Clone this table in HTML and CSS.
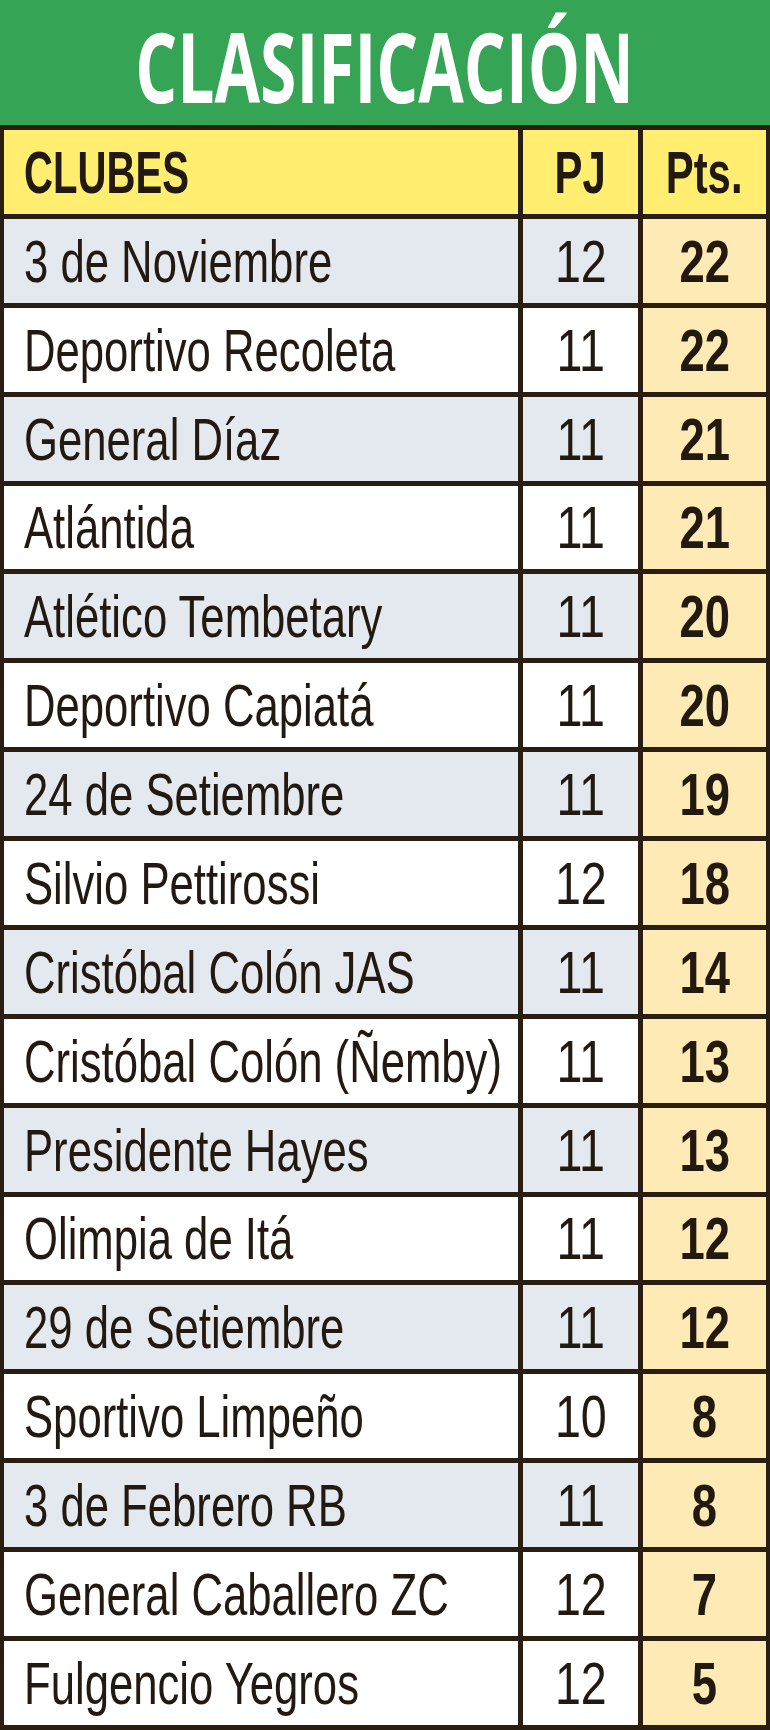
FILE: index.html
```html
<!DOCTYPE html>
<html lang="es">
<head>
<meta charset="utf-8">
<title>Clasificación</title>
<link rel="stylesheet" href="styles.css">
</head>
<body>
<div class="board">
  <h1 class="title"><span>CLASIFICACIÓN</span></h1>
  <div class="table">
    <div class="cell head club"><span>CLUBES</span></div>
    <div class="cell head num"><span>PJ</span></div>
    <div class="cell head pts"><span>Pts.</span></div>

    <div class="cell club alt"><span>3 de Noviembre</span></div>
    <div class="cell num alt"><span>12</span></div>
    <div class="cell pts"><span>22</span></div>

    <div class="cell club"><span>Deportivo Recoleta</span></div>
    <div class="cell num"><span>11</span></div>
    <div class="cell pts"><span>22</span></div>

    <div class="cell club alt"><span>General Díaz</span></div>
    <div class="cell num alt"><span>11</span></div>
    <div class="cell pts"><span>21</span></div>

    <div class="cell club"><span>Atlántida</span></div>
    <div class="cell num"><span>11</span></div>
    <div class="cell pts"><span>21</span></div>

    <div class="cell club alt"><span>Atlético Tembetary</span></div>
    <div class="cell num alt"><span>11</span></div>
    <div class="cell pts"><span>20</span></div>

    <div class="cell club"><span>Deportivo Capiatá</span></div>
    <div class="cell num"><span>11</span></div>
    <div class="cell pts"><span>20</span></div>

    <div class="cell club alt"><span>24 de Setiembre</span></div>
    <div class="cell num alt"><span>11</span></div>
    <div class="cell pts"><span>19</span></div>

    <div class="cell club"><span>Silvio Pettirossi</span></div>
    <div class="cell num"><span>12</span></div>
    <div class="cell pts"><span>18</span></div>

    <div class="cell club alt"><span>Cristóbal Colón JAS</span></div>
    <div class="cell num alt"><span>11</span></div>
    <div class="cell pts"><span>14</span></div>

    <div class="cell club"><span>Cristóbal Colón (Ñemby)</span></div>
    <div class="cell num"><span>11</span></div>
    <div class="cell pts"><span>13</span></div>

    <div class="cell club alt"><span>Presidente Hayes</span></div>
    <div class="cell num alt"><span>11</span></div>
    <div class="cell pts"><span>13</span></div>

    <div class="cell club"><span>Olimpia de Itá</span></div>
    <div class="cell num"><span>11</span></div>
    <div class="cell pts"><span>12</span></div>

    <div class="cell club alt"><span>29 de Setiembre</span></div>
    <div class="cell num alt"><span>11</span></div>
    <div class="cell pts"><span>12</span></div>

    <div class="cell club"><span>Sportivo Limpeño</span></div>
    <div class="cell num"><span>10</span></div>
    <div class="cell pts"><span>8</span></div>

    <div class="cell club alt"><span>3 de Febrero RB</span></div>
    <div class="cell num alt"><span>11</span></div>
    <div class="cell pts"><span>8</span></div>

    <div class="cell club"><span>General Caballero ZC</span></div>
    <div class="cell num"><span>12</span></div>
    <div class="cell pts"><span>7</span></div>

    <div class="cell club"><span>Fulgencio Yegros</span></div>
    <div class="cell num"><span>12</span></div>
    <div class="cell pts"><span>5</span></div>
  </div>
</div>
</body>
</html>
```

FILE: styles.css
```css
html, body {
  margin: 0;
  padding: 0;
}

body {
  width: 770px;
  background: #2a1e12;
}

.board {
  width: 770px;
}

.title {
  margin: 0;
  height: 125px;
  box-sizing: border-box;
  padding-top: 6px;
  background: #35a455;
  color: #ffffff;
  font-family: "Open Sans", "DejaVu Sans", sans-serif;
  font-weight: 700;
  font-size: 97px;
  line-height: 1;
  display: flex;
  align-items: center;
  justify-content: center;
}

.title span {
  display: inline-block;
  transform: scaleX(0.68);
  transform-origin: center;
  white-space: nowrap;
}

.table {
  display: grid;
  grid-template-columns: 514px 115px 123px;
  grid-auto-rows: 83.89px;
  gap: 5px;
  padding: 5px 4px;
  background: #2a1e12;
}

.cell {
  display: flex;
  align-items: center;
  box-sizing: border-box;
  padding-top: 3px;
  background: #ffffff;
  color: #221910;
  font-family: "Liberation Sans", Arial, sans-serif;
  font-size: 59px;
  line-height: 1;
  overflow: hidden;
  white-space: nowrap;
}

.cell span {
  display: inline-block;
}

.cell.alt {
  background: #e4e9ef;
}

.club {
  padding-left: 20px;
  justify-content: flex-start;
}

.club span {
  transform: scaleX(0.74);
  transform-origin: left center;
}

.num {
  justify-content: center;
}

.num span {
  transform: scaleX(0.79);
  transform-origin: center;
}

.pts {
  justify-content: center;
  background: #fdeab4;
  font-weight: 700;
}

.pts span {
  transform: scaleX(0.77);
  transform-origin: center;
}

.cell.head {
  background: #ffee6f;
  font-weight: 700;
}

.head.club span {
  transform: scaleX(0.68);
}

.head.num span,
.head.pts span {
  transform: scaleX(0.71);
}
```
